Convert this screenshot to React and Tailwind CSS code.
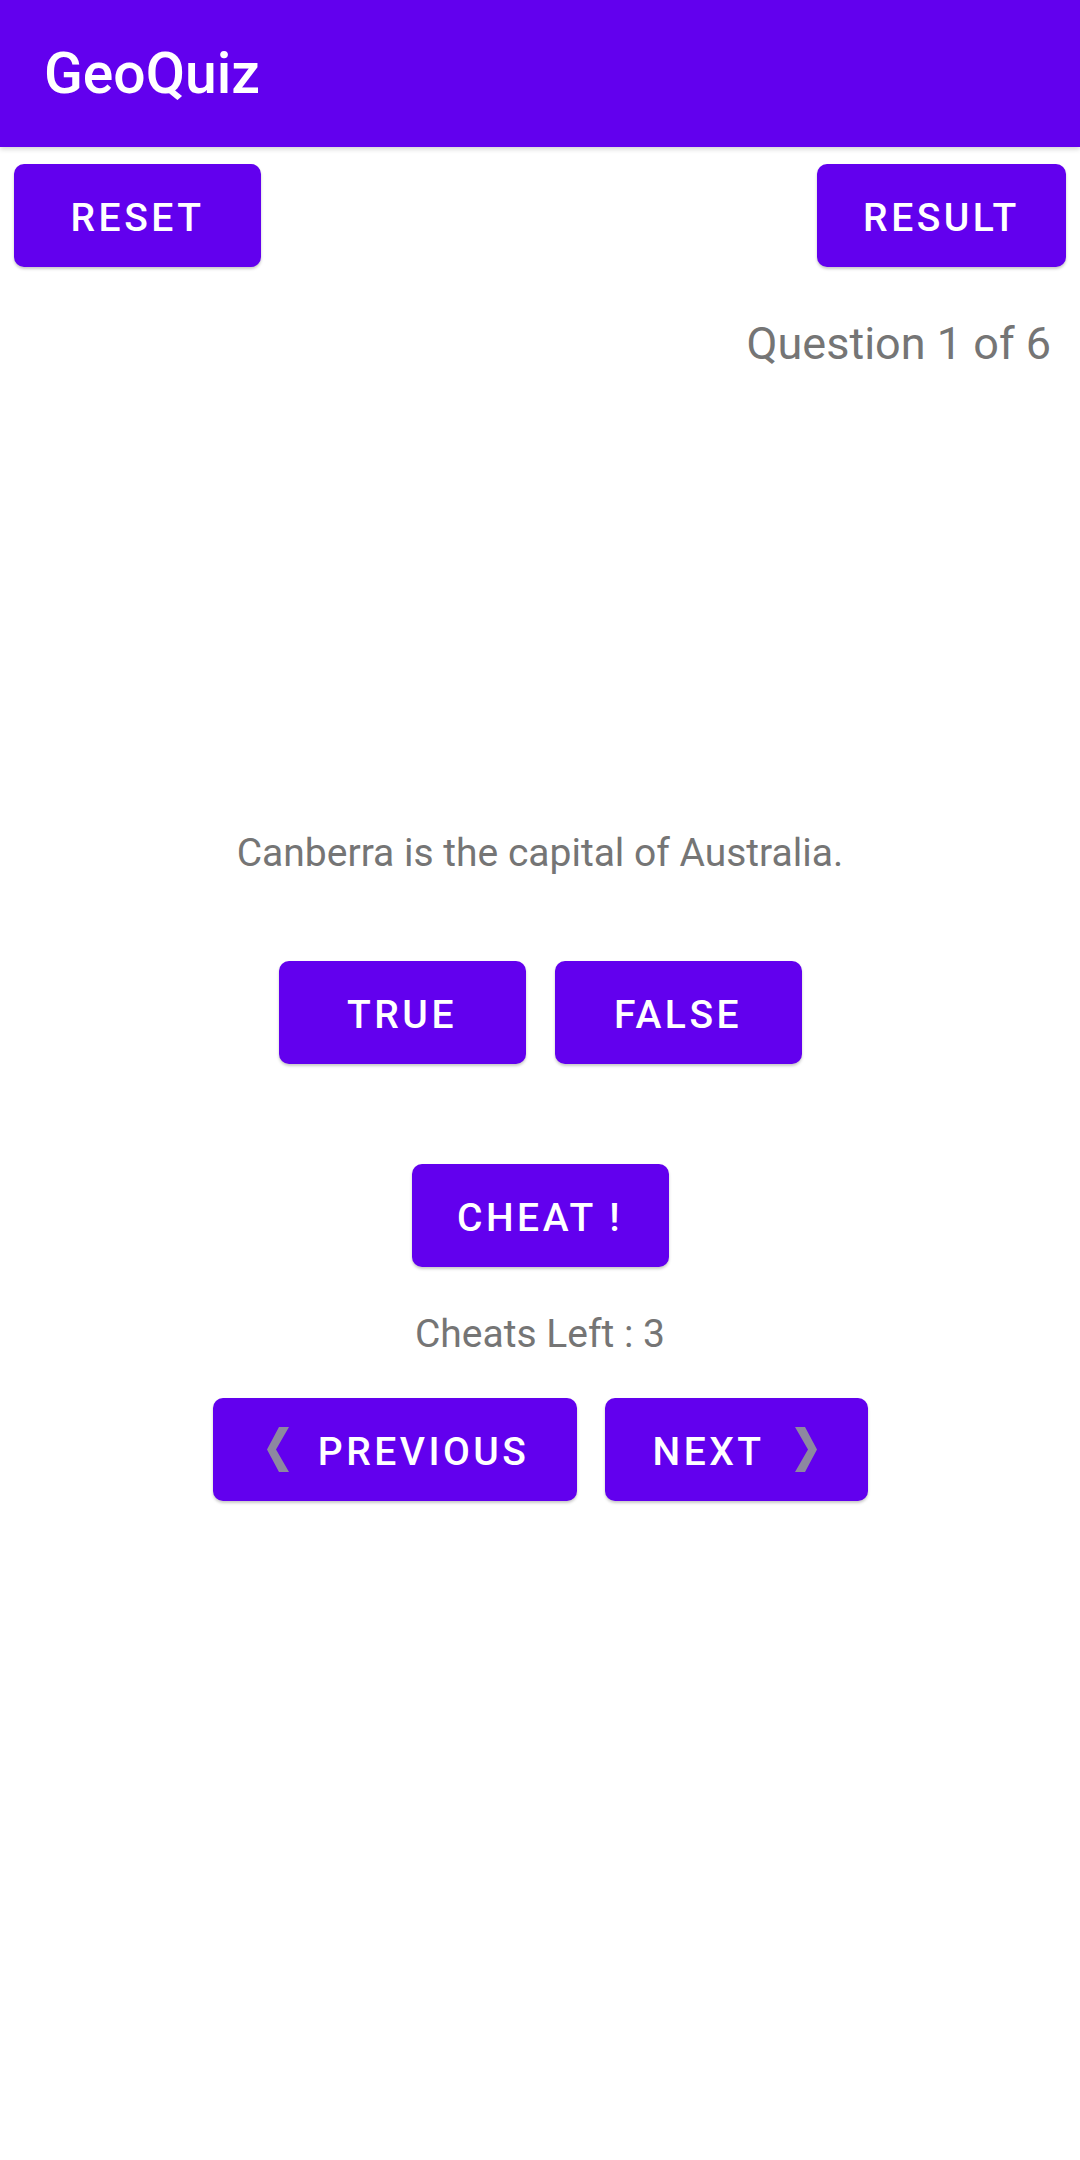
import React from "react";

const btn =
  "h-[103px] pt-[5px] bg-[#6200EE] text-white rounded-[10px] shadow-[0_2px_3px_rgba(0,0,0,0.22)] text-[39px] font-medium tracking-[3.5px] flex items-center";

const ChevronLeft = () => (
  <svg width="22" height="45" viewBox="0 0 22 45" className="-mt-[5px]">
    <polygon points="12,0 22,0 9,22.5 22,45 12,45 0,22.5" fill="#8d88a0" />
  </svg>
);

const ChevronRight = () => (
  <svg width="22" height="45" viewBox="0 0 22 45" className="-mt-[5px]">
    <polygon points="0,0 10,0 22,22.5 10,45 0,45 13,22.5" fill="#8d88a0" />
  </svg>
);

const App = () => {
  return (
    <div className="w-[1080px] min-h-[2160px] bg-white font-['Roboto',sans-serif]">
      <div className="relative z-10 h-[147px] bg-[#6200EE] flex items-center px-[44px] shadow-[0_2px_5px_rgba(0,0,0,0.18)]">
        <h1 className="text-[57px] leading-[66px] font-medium text-white">GeoQuiz</h1>
      </div>

      <div className="flex justify-between px-[14px] pt-[17px]">
        <button className={`${btn} w-[247px] justify-center`}>RESET</button>
        <button className={`${btn} w-[249px] justify-center`}>RESULT</button>
      </div>

      <p className="mt-[50px] pr-[29px] text-right text-[45px] leading-[53px] text-[#757575]">
        Question 1 of 6
      </p>

      <p className="mt-[460px] text-center text-[39px] leading-[46px] text-[#757575]">
        Canberra is the capital of Australia.
      </p>

      <div className="mt-[85px] flex justify-center gap-[29px]">
        <button className={`${btn} w-[247px] justify-center`}>TRUE</button>
        <button className={`${btn} w-[247px] justify-center`}>FALSE</button>
      </div>

      <div className="mt-[100px] flex justify-center">
        <button className={`${btn} w-[257px] justify-center`}>CHEAT !</button>
      </div>

      <p className="mt-[44px] text-center text-[39px] leading-[46px] text-[#757575]">
        Cheats Left : 3
      </p>

      <div className="mt-[41px] flex justify-center gap-[28px]">
        <button className={`${btn} w-[364px] justify-between pl-[54px] pr-[47px]`}>
          <ChevronLeft />
          <span>PREVIOUS</span>
        </button>
        <button className={`${btn} w-[263px] justify-between pl-[48px] pr-[51px]`}>
          <span>NEXT</span>
          <ChevronRight />
        </button>
      </div>
    </div>
  );
};

export default App;
